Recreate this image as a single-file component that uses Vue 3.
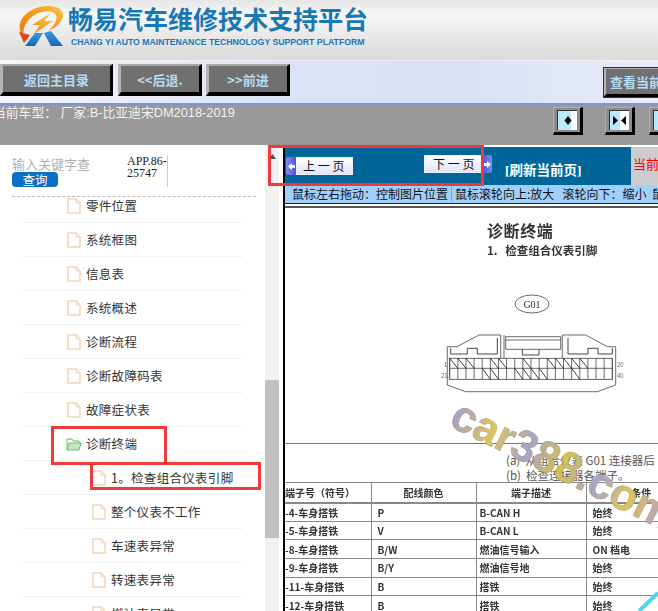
<script setup>
const topRows = ['零件位置', '系统框图', '信息表', '系统概述', '诊断流程', '诊断故障码表', '故障症状表']
const subRows = ['1。检查组合仪表引脚', '整个仪表不工作', '车速表异常', '转速表异常', '燃油表异常']

const tableRows = [
  ['-4-车身搭铁', 'P', 'B-CAN H', '始终'],
  ['-5-车身搭铁', 'V', 'B-CAN L', '始终'],
  ['-8-车身搭铁', 'B/W', '燃油信号输入', 'ON 档电'],
  ['-9-车身搭铁', 'B/Y', '燃油信号地', '始终'],
  ['-11-车身搭铁', 'B', '搭铁', '始终'],
  ['-12-车身搭铁', 'B', '搭铁', '始终']
]

// 连接器针脚：20 列，上下两排
const colW = 8.13
const pinLines = Array.from({ length: 21 }, (_, i) => 8.7 + i * colW)
const topSlashes = [0, 1, 2, 5, 6, 9, 12, 13, 14, 15, 16]
const bottomSlashes = [4, 5, 8, 9, 10, 11, 15]
</script>

<template>
  <div class="page">
    <header class="brand">
      <svg class="logo" width="46" height="42" viewBox="0 0 46 42">
        <defs>
          <linearGradient id="ring" x1="0" y1="1" x2="1" y2="0">
            <stop offset="0" stop-color="#ee7a12" />
            <stop offset="0.6" stop-color="#f59a1a" />
            <stop offset="1" stop-color="#f9c84a" />
          </linearGradient>
          <linearGradient id="bolt" x1="0" y1="1" x2="1" y2="0">
            <stop offset="0" stop-color="#f08a18" />
            <stop offset="1" stop-color="#f8d030" />
          </linearGradient>
          <linearGradient id="leg" x1="0" y1="0" x2="0" y2="1">
            <stop offset="0" stop-color="#3d9be0" />
            <stop offset="1" stop-color="#1667b8" />
          </linearGradient>
        </defs>
        <path d="M7 32C-5 20 9 1 32 1c12 0 17 7 12 15-3 5-8 8-13 10 6-5 10-11 8-16-3-5-15-5-23 1-8 6-11 14-9 21z" fill="url(#ring)" />
        <path d="M2 27l11 3-6 8z" fill="#e0481c" />
        <path d="M34 8L15 20h8l-6 9 19-13h-9z" fill="url(#bolt)" />
        <path d="M18 28h8L18 41H8z" fill="url(#leg)" />
        <path d="M27 28l7-2 12 15H34z" fill="url(#leg)" />
      </svg>
      <div class="brand-text">
        <div class="brand-cn">畅易汽车维修技术支持平台</div>
        <div class="brand-en">CHANG YI AUTO MAINTENANCE TECHNOLOGY SUPPORT PLATFORM</div>
      </div>
    </header>

    <nav class="toolbar">
      <button class="tool-btn home">返回主目录</button>
      <button class="tool-btn back">&lt;&lt;后退.</button>
      <button class="tool-btn back">&gt;&gt;前进</button>
      <button class="tool-btn view">查看当前页</button>
    </nav>

    <div class="model-bar">
      <span class="model-text">当前车型： 厂家:B-比亚迪宋DM2018-2019</span>
      <div class="model-tools">
        <span class="icon-btn">
          <svg width="19" height="19" viewBox="0 0 19 19">
            <rect width="19" height="19" fill="#b9e9fa" />
            <rect x="13" width="6" height="19" fill="#fff" />
            <path d="M10 5l3.500 4.500-3.500 4.500-3.500-4.500z" fill="#000" />
          </svg>
        </span>
        <span class="icon-btn">
          <svg width="19" height="19" viewBox="0 0 19 19">
            <rect width="10" height="19" fill="#b9e9fa" />
            <rect x="10" width="9" height="19" fill="#fff" />
            <path d="M3 5l5 4.500-5 4.500zM16 5l-5 4.500 5 4.500z" fill="#000" />
          </svg>
        </span>
        <span class="icon-btn">
          <svg width="19" height="19" viewBox="0 0 19 19">
            <rect width="19" height="19" fill="#b9e9fa" />
          </svg>
        </span>
      </div>
    </div>

    <main class="main">
      <aside class="side">
        <div class="search">
          <div class="search-left">
            <div class="search-hint">输入关键字查</div>
            <button class="search-btn">查询</button>
          </div>
          <div class="app-code">APP.86-25747</div>
        </div>
        <ul class="tree">
          <li v-for="name in topRows" :key="name" class="row">
            <svg class="file" width="14" height="16" viewBox="0 0 14 16">
              <path d="M1 1h8l4 4v10H1z" fill="#fff" stroke="#f3d6b3" stroke-width="1.500" />
              <path d="M9 1v4h4" fill="none" stroke="#f3d6b3" />
            </svg>
            <span>{{ name }}</span>
          </li>
          <li class="row">
            <svg class="folder" width="16" height="14" viewBox="0 0 16 14">
              <path d="M1 13V2h5l1 2h6v2" fill="#fff" stroke="#6dbb6d" />
              <path d="M1 13l2-7h12l-2 7z" fill="#c5e8bd" stroke="#6dbb6d" />
            </svg>
            <span>诊断终端</span>
          </li>
          <li v-for="name in subRows" :key="name" class="row sub">
            <svg class="file" width="14" height="16" viewBox="0 0 14 16">
              <path d="M1 1h8l4 4v10H1z" fill="#fff" stroke="#f3d6b3" stroke-width="1.500" />
              <path d="M9 1v4h4" fill="none" stroke="#f3d6b3" />
            </svg>
            <span>{{ name }}</span>
          </li>
        </ul>
      </aside>

      <div class="scroll">
        <svg class="scroll-up" width="7" height="5" viewBox="0 0 7 5"><path d="M3.500 0L7 5H0z" fill="#505050" /></svg>
        <div class="scroll-thumb"></div>
      </div>

      <section class="viewer">
        <div class="pager">
          <button class="page-btn prev">
            <i class="cap"><svg width="9" height="9" viewBox="0 0 9 9"><path d="M1 4.500L5 1v2h3v3H5v2z" fill="#fff" /></svg></i>
            <span>上 一 页</span>
          </button>
          <button class="page-btn next">
            <span>下 一 页</span>
            <i class="cap"><svg width="9" height="9" viewBox="0 0 9 9"><path d="M8 4.500L4 1v2H1v3h3v2z" fill="#fff" /></svg></i>
          </button>
          <span class="refresh">[刷新当前页]</span>
          <span class="current">当前</span>
        </div>
        <div class="hint">鼠标左右拖动：控制图片位置<i class="hint-sep"></i>鼠标滚轮向上:放大&nbsp;&nbsp;&nbsp;滚轮向下：缩小&nbsp;&nbsp;鼠标</div>
        <div class="doc">
          <div class="doc-inner">
            <h2 class="doc-title">诊断终端</h2>
            <p class="doc-sub">1.&nbsp;&nbsp;&nbsp;检查组合仪表引脚</p>
            <svg class="connector" width="190" height="112" viewBox="0 0 190 112" fill="none" stroke="#444" stroke-width="0.800">
              <ellipse cx="91" cy="12" rx="17" ry="9" />
              <text x="91" y="15.500" text-anchor="middle" font-size="10" fill="#333" stroke="none" font-family="Liberation Serif">G01</text>
              <!-- 外壳 -->
              <path d="M6.300 54.700H16L38 43h21.700v23M63 66V43M64.700 44.700h55v12.600h-55zM64.700 48h55M121.300 66V43h23.400l21.600 11.700h8.400V93l-18.400 6.700H24.700L6.300 93V54.700" />
              <!-- 内部卡扣 -->
              <path d="M9.700 56.300V62h16.600v-5.700h10V62h20V46M81.300 57.300V63H98v-5.700M127 46v16h20v-5.700h10V62h14.300v-6" stroke-width="1" />
              <rect x="8.700" y="66.300" width="162.600" height="21" />
              <path d="M8.700 76.300h162.600" />
              <path v-for="x in pinLines" :key="x" :d="`M${x} 66.300v21`" />
              <path v-for="i in topSlashes" :key="`t${i}`" :d="`M${pinLines[i]} 66.300l${colW} 10`" stroke="#111" />
              <path v-for="i in bottomSlashes" :key="`b${i}`" :d="`M${pinLines[i]} 76.300l${colW} 11`" stroke="#111" />
              <text x="3" y="75" font-size="6" fill="#666" stroke="none">1</text>
              <text x="0" y="86" font-size="6" fill="#666" stroke="none">21</text>
              <text x="176" y="75" font-size="6" fill="#666" stroke="none">20</text>
              <text x="176" y="86" font-size="6" fill="#666" stroke="none">40</text>
            </svg>
          </div>
          <div class="rule"></div>
          <div class="steps">
            <p>(a)&nbsp;&nbsp;从组合仪表 G01 连接器后</p>
            <p>(b)&nbsp;&nbsp;检查连接器各端子。</p>
          </div>
          <table class="pins">
            <thead>
              <tr><th>端子号（符号）</th><th>配线颜色</th><th>端子描述</th><th>条件</th></tr>
            </thead>
            <tbody>
              <tr v-for="row in tableRows" :key="row[0]">
                <td v-for="cell in row" :key="cell">{{ cell }}</td>
              </tr>
            </tbody>
          </table>
          <div class="watermark">car388.com</div>
          <svg class="watermark-tail" width="20" height="20" viewBox="0 0 20 20">
            <path d="M1 20L20 2" stroke="#4fd4f4" stroke-width="4" fill="none" />
          </svg>
        </div>
      </section>
    </main>

    <!-- 红色标注框 -->
    <div class="mark mark-pager"></div>
    <div class="mark mark-folder"></div>
    <div class="mark mark-item"></div>
  </div>
</template>

<style scoped>
.page {
  position: relative;
  width: 658px;
  height: 611px;
  overflow: hidden;
  display: flex;
  flex-direction: column;
  font-family: "Noto Sans CJK SC", "Liberation Sans", sans-serif;
  background: #fff;
}

.brand {
  height: 60px;
  flex: none;
  box-sizing: border-box;
  padding: 5px 0 0 17px;
  display: flex;
  gap: 5px;
  background: linear-gradient(#e6e6e6, #f7f7f7 25%, #e0e0e0 80%, #dcdcdc);
}

.brand-cn {
  font-size: 25px;
  line-height: 26px;
  font-weight: 700;
  color: #1878b4;
  white-space: nowrap;
}

.brand-en {
  font-family: "Liberation Sans", sans-serif;
  font-size: 8.700px;
  font-weight: 700;
  color: #1878b4;
  margin: 6px 0 0 3px;
  white-space: nowrap;
}

.toolbar {
  height: 43px;
  flex: none;
  box-sizing: border-box;
  padding-top: 3px;
  display: flex;
  align-items: flex-start;
  background: linear-gradient(90deg, #f4f6fc, #dde3f6 40%, #d9e0f6 70%, #e8ecfa);
  border-top: 1px solid #f2f2f2;
}

.tool-btn {
  height: 32px;
  padding: 0;
  flex: none;
  font-family: inherit;
  font-size: 13px;
  font-weight: 700;
  color: #b4dcf2;
  background: #707070;
  border-style: solid;
  border-color: #a8a8a8 #000 #000 #b4b4b4;
  border-width: 2px 3px 4px 3px;
  margin-right: 4px;
}

.home { width: 113px; margin-right: 5px; }
.back { width: 84px; }

.view {
  width: 100px;
  margin: 3px 0 0 309px;
  height: 31px;
  outline: 1px solid #333;
  outline-offset: -1px;
  text-align: left;
  padding-left: 4px;
  white-space: nowrap;
}

.model-bar {
  height: 42px;
  flex: none;
  box-sizing: border-box;
  border-top: 2px solid #7d94d2;
  background: #999;
  display: flex;
  justify-content: space-between;
  color: #f2f2f2;
  font-size: 12.800px;
}

.model-text {
  margin-left: -7px;
  line-height: 16px;
  white-space: nowrap;
  font-family: "Liberation Sans", "Noto Sans CJK SC", sans-serif;
}

.model-tools {
  display: flex;
  gap: 22px;
  margin: 2px -21px 0 0;
}

.icon-btn {
  width: 30px;
  height: 28px;
  box-sizing: border-box;
  background: #8c8c8c;
  border-style: solid;
  border-color: #b0b0b0 #000 #000 #b0b0b0;
  border-width: 1px 3px 3px 1px;
  display: flex;
  align-items: center;
  justify-content: center;
}

.icon-btn:last-child { margin-left: -8px; }

.icon-btn svg {
  border-top: 1px solid #333;
  border-left: 1px solid #333;
}

.main {
  flex: 1;
  min-height: 0;
  display: flex;
}

.side {
  width: 265px;
  flex: none;
  overflow: hidden;
}

.search {
  height: 52px;
  box-sizing: border-box;
  margin: 0 9px 0 12px;
  padding-top: 10px;
  display: flex;
  border-bottom: 1px dashed #bbb;
}

.search-left { width: 115px; }

.search-hint {
  font-size: 13px;
  line-height: 17px;
  color: #b0b0b0;
}

.search-btn {
  display: block;
  width: 46px;
  height: 15px;
  margin-top: 0;
  padding: 0;
  border: 0;
  border-radius: 4px;
  background: #0a6fc6;
  color: #fff;
  font-family: inherit;
  font-size: 12.500px;
  line-height: 15px;
}

.app-code {
  width: 41px;
  height: 32px;
  box-sizing: border-box;
  font-family: "Liberation Serif", serif;
  font-size: 12px;
  line-height: 12px;
  color: #222;
  border-right: 1px solid #ccc;
  word-break: break-all;
  white-space: normal;
}

.tree {
  list-style: none;
  margin: -8px 22px 0 22px;
  padding: 0;
}

.row {
  height: 34px;
  box-sizing: border-box;
  display: flex;
  align-items: center;
  gap: 5px;
  padding-left: 45px;
  border-bottom: 1px solid #f2f2f2;
  font-size: 12.500px;
  color: #333;
  letter-spacing: 0.300px;
  white-space: nowrap;
}

.sub { padding-left: 70px; }

.folder { margin: 0 -1px; }

.scroll {
  position: relative;
  width: 14px;
  flex: none;
  background: #f1f1f1;
}

.scroll-up {
  display: block;
  margin: 9px 0 0 4px;
}

.scroll-thumb {
  width: 14px;
  height: 158px;
  margin-top: 221px;
  background: #c1c1c1;
}

.viewer {
  flex: 1;
  min-width: 0;
  margin-left: 4px;
  border-left: 2px solid #000;
  display: flex;
  flex-direction: column;
}

.pager {
  height: 38px;
  flex: none;
  margin-top: 2px;
  display: flex;
  background: linear-gradient(90deg, #006699 346px, #ccc 346px);
  position: relative;
}

.page-btn {
  height: 18px;
  padding: 0;
  border: 0;
  font-family: inherit;
  font-size: 12px;
  color: #111;
  display: flex;
  align-items: stretch;
  background: none;
  text-align: left;
}

.page-btn span {
  display: block;
  line-height: 16px;
  background: linear-gradient(#fff, #dfe3fa);
  border: 1px solid #eef;
  white-space: nowrap;
}

.cap {
  font-style: normal;
  width: 10px;
  display: flex;
  align-items: center;
  justify-content: center;
  background: linear-gradient(90deg, #7d8cf0, #4a58d8);
}

.prev { width: 67px; margin: 10px 0 0 1px; }
.prev span { flex: 1; padding-left: 7px; border-left: 0; }
.prev .cap { border-radius: 2px 0 0 2px; }

.next { width: 68px; margin: 8px 0 0 71px; }
.next span { flex: 1; padding-left: 8px; border-right: 0; }
.next .cap { width: 9px; border-radius: 0 3px 3px 0; background: linear-gradient(90deg, #4a58d8, #7d8cf0); }

.refresh {
  margin: 15px 0 0 13px;
  font-family: "Liberation Serif", "Noto Sans CJK SC", serif;
  font-size: 13.500px;
  line-height: 18px;
  font-weight: 700;
  color: #fff;
  white-space: nowrap;
}

.current {
  position: absolute;
  left: 348px;
  top: 7px;
  font-size: 13px;
  color: #f00;
  white-space: nowrap;
}

.hint {
  height: 19px;
  flex: none;
  box-sizing: border-box;
  padding-left: 7px;
  background: #a0cffa;
  border-bottom: 1px solid #222;
  font-size: 12px;
  line-height: 18px;
  color: #112;
  white-space: nowrap;
  overflow: hidden;
}

.hint-sep {
  display: inline-block;
  width: 1px;
  height: 14px;
  margin: 0 3px;
  vertical-align: -2px;
  background: #6fa6dc;
}

.doc {
  position: relative;
  flex: 1;
  min-height: 0;
  overflow: hidden;
  border-top: 2px solid #555;
  margin-top: 2px;
  background: #fff;
  color: #333;
}

.doc-inner {
  height: 235px;
  box-sizing: border-box;
  padding: 11px 0 0 202px;
  filter: blur(0.3px);
}

.doc-title {
  margin: 0 0 1px;
  font-size: 16px;
  line-height: 22px;
  font-weight: 700;
  letter-spacing: 0.600px;
}

.doc-sub {
  margin: 0;
  font-size: 11.500px;
  line-height: 16px;
  font-weight: 700;
  white-space: nowrap;
}

.connector {
  display: block;
  margin: 34px 0 0 -46px;
}

.rule {
  height: 1px;
  background: #777;
}

.steps {
  height: 38px;
  box-sizing: border-box;
  padding: 9px 0 0 221px;
  font-size: 11.500px;
  line-height: 15px;
  color: #555;
  white-space: nowrap;
}

.steps p { margin: 0; }

.pins {
  width: 412px;
  table-layout: fixed;
  border-collapse: collapse;
  font-size: 10px;
  color: #333;
  filter: blur(0.3px);
}

.pins th,
.pins td {
  height: 18.700px;
  box-sizing: border-box;
  padding: 0 0 0 6px;
  border: 1px solid #888;
  text-align: left;
  white-space: nowrap;
  font-weight: 700;
}

.pins th {
  height: 20px;
  text-align: center;
  padding: 0;
  border-bottom-width: 2px;
}

.pins th:nth-child(1) { width: 86px; text-align: left; }
.pins th:nth-child(2) { width: 105px; }
.pins th:nth-child(3) { width: 110px; }

.pins tr > :first-child { border-left: 0; padding-left: 0; }
.pins td:nth-child(3) { padding-left: 3px; }

.watermark {
  position: absolute;
  left: 179px;
  top: 184px;
  transform: rotate(26deg);
  transform-origin: left top;
  font-family: "Liberation Sans", sans-serif;
  font-size: 44px;
  font-weight: 700;
  line-height: 44px;
  white-space: nowrap;
  background: linear-gradient(90deg, #a99ccc, #dcc65c 18%, #a9a4c8 34%, #d8c050 50%, #a9a4c8 66%, #dcc65c 80%, #b098d0);
  -webkit-background-clip: text;
  background-clip: text;
  color: transparent;
  -webkit-text-stroke: 0.500px rgba(120, 110, 90, 0.45);
}

.watermark-tail {
  position: absolute;
  right: 0;
  bottom: 0;
}

.mark {
  position: absolute;
  box-sizing: border-box;
  border: 3px solid #ee3a3a;
  pointer-events: none;
}

.mark-pager { left: 268px; top: 145px; width: 216px; height: 41px; }
.mark-folder { left: 51px; top: 426px; width: 116px; height: 39px; }
.mark-item { left: 90px; top: 462px; width: 171px; height: 28px; }
</style>

<style>
html, body { margin: 0; }
</style>
